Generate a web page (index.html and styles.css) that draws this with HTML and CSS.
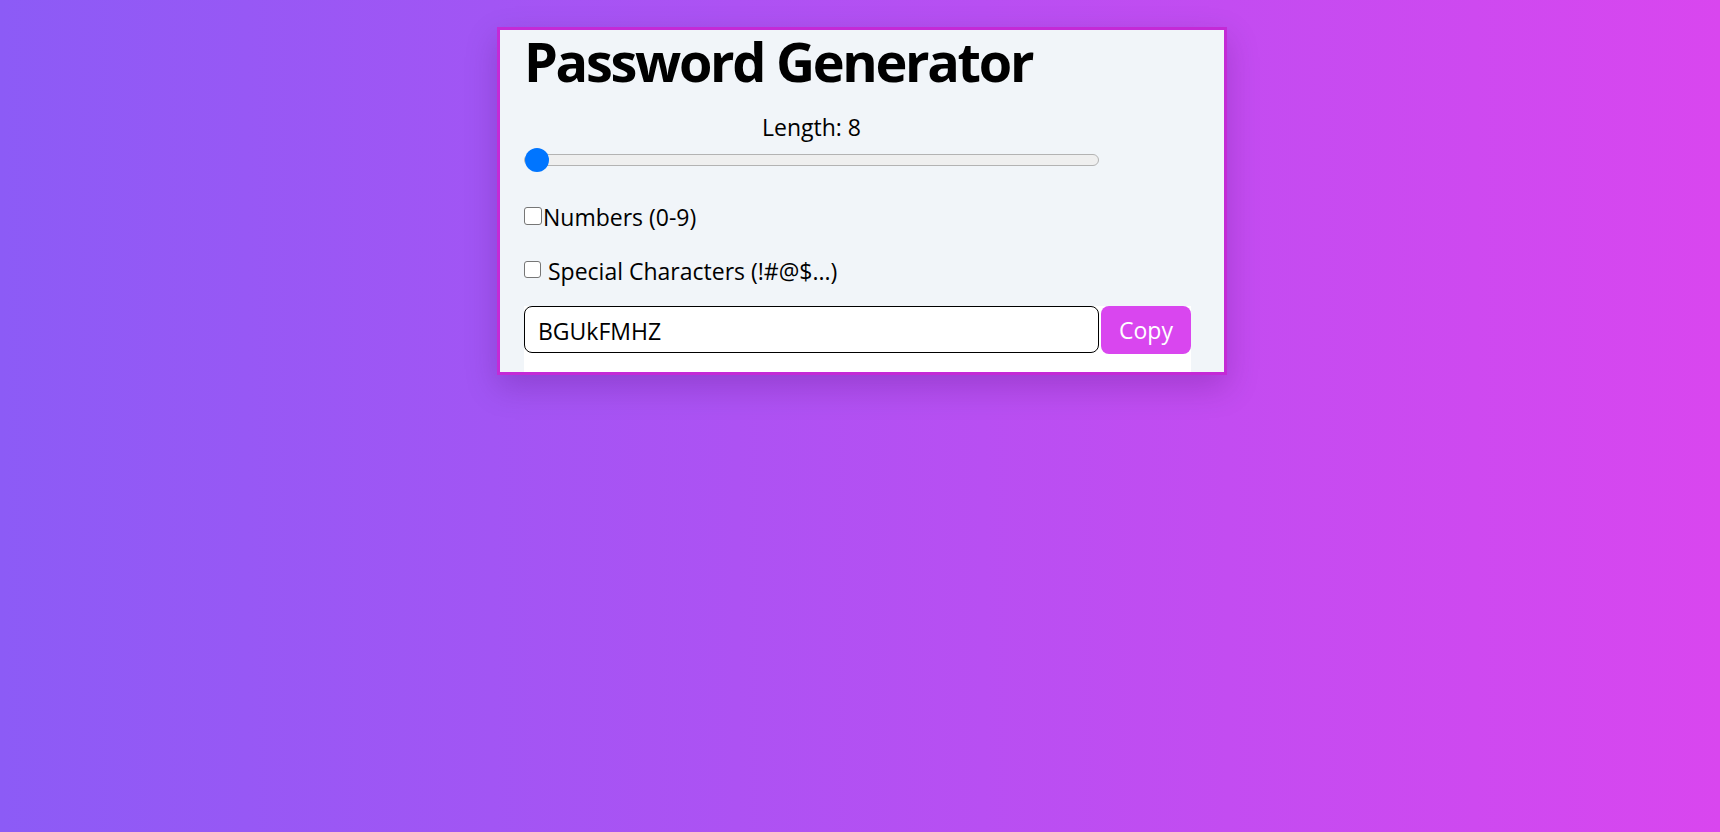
FILE: index.html
```html
<!DOCTYPE html>
<html lang="en">
<head>
<meta charset="utf-8">
<title>Password Generator</title>
<link rel="stylesheet" href="styles.css">
</head>
<body>
<main class="page">
  <section class="card">
    <h1 class="title">Password Generator</h1>
    <div class="length">
      <div class="length-label">Length: 8</div>
      <input class="range" type="range" min="8" max="32" value="8">
    </div>
    <label class="option option-first"><input class="check check-tight" type="checkbox">Numbers (0-9)</label>
    <label class="option option-second"><input class="check" type="checkbox"> Special Characters (!#@$...)</label>
    <div class="output">
      <input class="password" type="text" value="BGUkFMHZ" readonly>
      <button class="copy" type="button">Copy</button>
    </div>
  </section>
</main>
</body>
</html>
```

FILE: styles.css
```css
* { box-sizing: border-box; }

html, body {
  margin: 0;
  padding: 0;
  height: 100%;
}

body {
  background: linear-gradient(to right, #8c5bf6, #d946ef);
  font-family: "Open Sans", "Noto Sans", sans-serif;
  color: #000;
}

.page {
  padding-top: 27px;
  padding-left: 4px;
  display: flex;
  justify-content: center;
}

.card {
  width: 730px;
  background: #f1f5f9;
  border: 3px solid #c42ad6;
  padding: 0 24px;
  box-shadow: 0 12px 30px rgba(60, 0, 90, 0.22);
}

.title {
  margin: 0;
  font-size: 54px;
  line-height: 62px;
  font-weight: 700;
  letter-spacing: -2.3px;
}

.length {
  width: 575px;
  margin-top: 20px;
}

.length-label {
  text-align: center;
  font-size: 23px;
  line-height: 30px;
}

.range {
  -webkit-appearance: none;
  appearance: none;
  display: block;
  width: 575px;
  height: 24px;
  margin: 6px 0 0 0;
  padding: 0;
  background: transparent;
}

.range::-webkit-slider-runnable-track {
  height: 12px;
  background: #efefef;
  border: 1px solid #b3b3b3;
  border-radius: 6px;
}

.range::-webkit-slider-thumb {
  -webkit-appearance: none;
  appearance: none;
  width: 24px;
  height: 24px;
  margin-top: -7px;
  border-radius: 50%;
  background: #0075ff;
  border: none;
}

.option {
  display: block;
  font-size: 23px;
  line-height: 30px;
}

.option-first { margin-top: 30px; }
.option-second { margin-top: 24px; }

.check {
  -webkit-appearance: none;
  appearance: none;
  display: inline-block;
  vertical-align: top;
  width: 17px;
  height: 17px;
  margin: 5px 1px 0 0;
  border: 1px solid #767676;
  border-radius: 3px;
  background: #fff;
}

.check-tight { width: 18px; height: 18px; }

.output {
  display: flex;
  align-items: flex-start;
  gap: 2px;
  width: 667px;
  height: 66px;
  margin-top: 20px;
  background: #fff;
}

.password {
  width: 575px;
  height: 47px;
  margin: 0;
  padding: 3px 13px 0 13px;
  border: 1px solid #000;
  border-radius: 8px;
  background: #fff;
  font-family: "Open Sans", "Noto Sans", sans-serif;
  font-size: 23px;
  color: #000;
  outline: none;
}

.copy {
  width: 90px;
  height: 48px;
  margin: 0;
  padding: 0;
  border: none;
  border-radius: 8px;
  background: #d946ef;
  color: #fff;
  font-family: "Open Sans", "Noto Sans", sans-serif;
  font-size: 23px;
}
```
